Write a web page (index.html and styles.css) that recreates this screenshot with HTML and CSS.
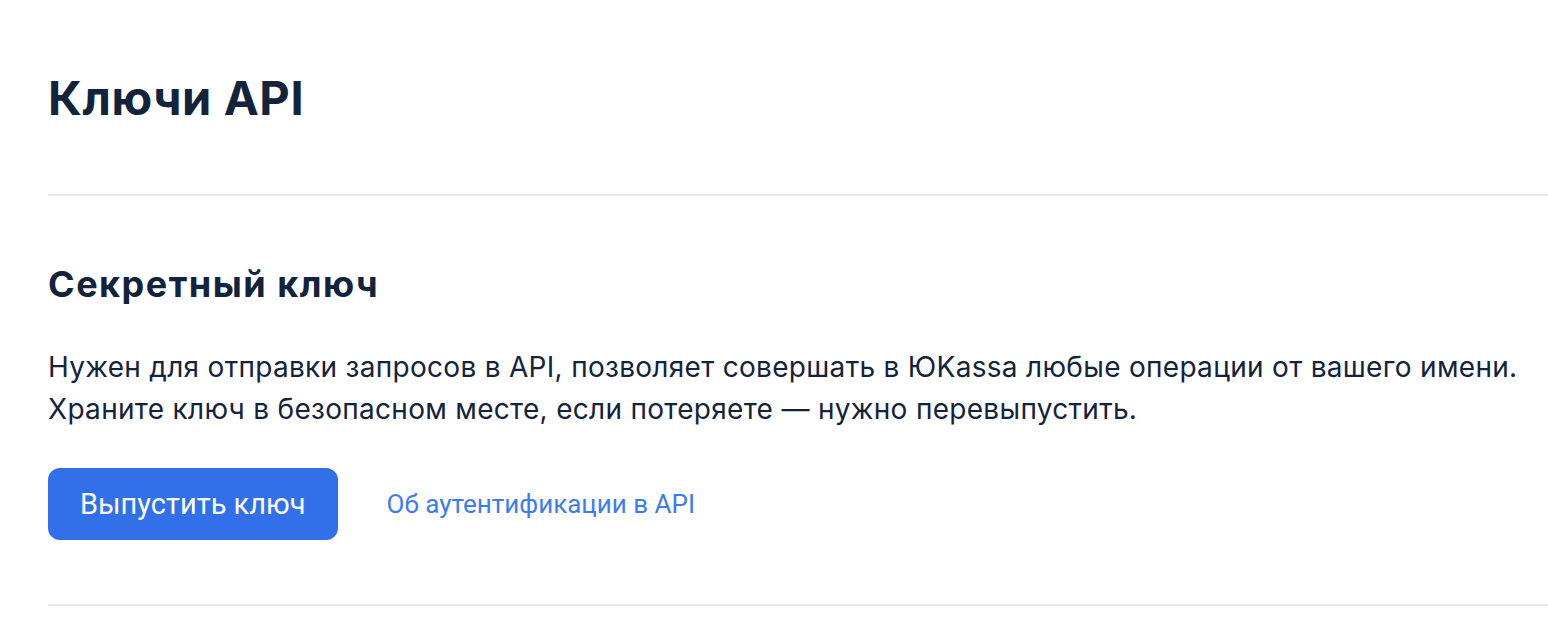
FILE: index.html
```html
<!DOCTYPE html>
<html lang="ru">
<head>
<meta charset="utf-8">
<link rel="stylesheet" href="styles.css">
</head>
<body>
<main class="page">
  <h1 class="title">Ключи API</h1>
  <hr class="divider">
  <section class="section">
    <h2 class="section-title">Секретный ключ</h2>
    <p class="desc">Нужен для отправки запросов в API, позволяет совершать в ЮKassa любые операции от вашего имени.<br>Храните ключ в безопасном месте, если потеряете — нужно перевыпустить.</p>
    <div class="actions">
      <button class="btn">Выпустить ключ</button>
      <a class="link" href="#">Об аутентификации в API</a>
    </div>
  </section>
  <hr class="divider divider-bottom">
</main>
</body>
</html>
```
FILE: styles.css
```css
html, body {
  margin: 0;
  padding: 0;
  background: #ffffff;
}
body {
  font-family: "Inter", "Noto Sans", sans-serif;
  color: #14233c;
}
.page {
  padding: 64px 0 0 48px;
}
.title {
  margin: 0;
  font-size: 47px;
  line-height: 68px;
  font-weight: 700;
  letter-spacing: 0.6px;
}
.divider {
  border: 0;
  height: 2px;
  background: #e8e8ea;
  margin: 62px 0 0 0;
}
.section {
  padding-top: 66px;
}
.section-title {
  margin: 0;
  font-size: 36px;
  line-height: 44px;
  font-weight: 700;
  letter-spacing: 1.5px;
}
.desc {
  margin: 40px 0 0 0;
  font-size: 28px;
  line-height: 42px;
  font-weight: 400;
  letter-spacing: 0.3px;
}
.actions {
  display: flex;
  align-items: center;
  gap: 49px;
  margin-top: 38px;
}
.btn {
  height: 72px;
  padding: 0 32px;
  border: 0;
  border-radius: 12px;
  background: #3170e9;
  color: #ffffff;
  font-family: "Roboto", sans-serif;
  font-size: 29px;
  font-weight: 400;
}
.link {
  color: #3b7cf0;
  text-decoration: none;
  font-family: "Roboto", sans-serif;
  font-size: 26px;
}
.divider-bottom {
  margin-top: 64px;
}
```
